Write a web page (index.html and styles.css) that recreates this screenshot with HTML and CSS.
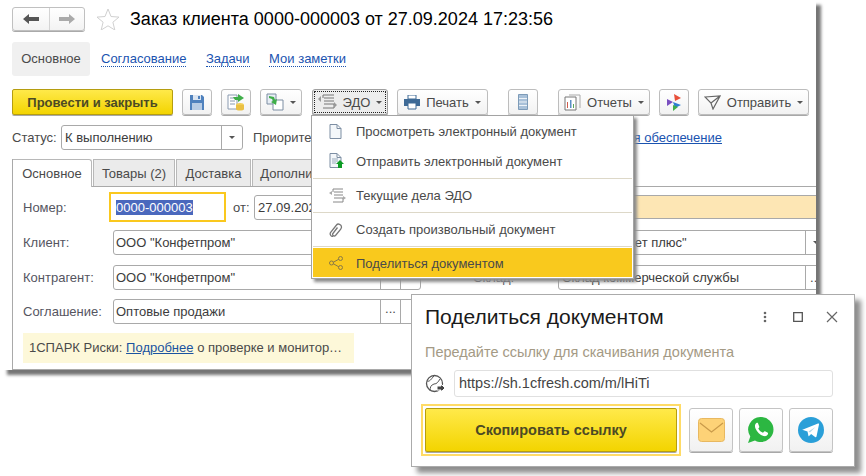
FILE: index.html
```html
<!DOCTYPE html>
<html lang="ru">

<head>
    <meta charset="UTF-8" />
    <title>Заказ клиента</title>
    <link rel="stylesheet" href="styles.css">
</head>

<body>
    <!-- MAIN WINDOW -->
    <div class="window">
        <div class="title-row">
            <div class="history-btns">
                <div class="history-btn">
                    <svg width="16" height="12" viewBox="0 0 16 12"><path d="M0 6 6 1v3h10v4H6v3z" fill="#555"/></svg>
                </div>
                <div class="history-btn">
                    <svg width="16" height="12" viewBox="0 0 16 12"><path d="M16 6 10 1v3H0v4h10v3z" fill="#aaa"/></svg>
                </div>
            </div>
            <svg class="star" width="24" height="22" viewBox="0 0 24 22"><path d="M12 1l3 7.500 8 .6-6.100 5.100 1.900 7.800L12 17.800 5.200 22l1.900-7.800L1 9.100l8-.6z" fill="#fff" stroke="#d0d0d0"/></svg>
            <div class="page-title">Заказ клиента 0000-000003 от 27.09.2024 17:23:56</div>
        </div>

        <div class="section-tabs">
            <div class="section-tab active">Основное</div>
            <a class="section-link">Согласование</a>
            <a class="section-link">Задачи</a>
            <a class="section-link">Мои заметки</a>
        </div>

        <!-- TOOLBAR -->
        <div class="toolbar">
            <div class="btn btn-yellow btn-post">Провести и закрыть</div>
            <div class="btn btn-icon gap-9">
                <svg width="16" height="17" viewBox="0 0 16 17"><path d="M1 1h12l2 2v13H1z" fill="#4f81bd"/><path d="M4 1h8v5H4z" fill="#dbe5f1"/><path d="M3 9h10v7H3z" fill="#b8cce4"/><path d="M9 2h2v3H9z" fill="#4f81bd"/></svg>
            </div>
            <div class="btn btn-icon gap-9">
                <svg width="18" height="18" viewBox="0 0 18 18"><path d="M1 2h9v14H1z" fill="#fff" stroke="#8a9ab0"/><path d="M3 5h5M3 8h5M3 11h5" stroke="#8a9ab0"/><path d="M6 4h5V1l6 4-6 4V7H8z" fill="#3fae49"/><ellipse cx="13" cy="12" rx="4" ry="2" fill="#f3cf55"/><path d="M9 12h8v4c0 2-8 2-8 0z" fill="#eac043"/></svg>
            </div>
            <div class="btn btn-drop gap-9 btn-copy">
                <svg width="18" height="18" viewBox="0 0 18 18"><path d="M1 1h9v10H1z" fill="#e8eef5" stroke="#7d8ea3"/><path d="M7 7h10v10H7z" fill="#fff" stroke="#7d8ea3"/><path d="M3 3l5 1 1 3 2-1-1 6-5-3 2-1-1-2-3-1z" fill="#3fae49"/></svg>
                <span class="caret"></span>
            </div>
            <div class="btn btn-drop btn-focus gap-10 btn-edo">
                <svg width="19" height="16" viewBox="0 0 19 16"><path d="M5 1h11M6 4h10M6 7h10M6 10h10M5 14h11M5 1v3M16 10v4" fill="none" stroke="#777"/><path d="M0 5l3-3v6zM19 11l-3-3v6z" fill="#999"/></svg>
                <span class="btn-text">ЭДО</span>
                <span class="caret"></span>
            </div>
            <div class="btn btn-drop gap-9 btn-print">
                <svg width="16" height="15" viewBox="0 0 16 15"><path d="M4 0h8v4H4z" fill="#fff" stroke="#3e6a96"/><path d="M0 4h16v7H0z" fill="#3e6a96"/><path d="M4 8h8v6H4z" fill="#fff" stroke="#3e6a96"/></svg>
                <span class="btn-text">Печать</span>
                <span class="caret"></span>
            </div>
            <div class="btn btn-icon gap-20">
                <svg width="10" height="16" viewBox="0 0 10 16"><path d="M.5.5h9v15h-9z" fill="#a9c1d9" stroke="#7d9bb8"/><path d="M1 4.500h8M1 8h8M1 11.500h8" stroke="#eef3f8"/></svg>
            </div>
            <div class="btn btn-drop gap-20 btn-reports">
                <svg width="17" height="17" viewBox="0 0 17 17"><path d="M1 3h11v13H1z" fill="#fff" stroke="#777"/><path d="M5 1h11v13" fill="none" stroke="#aaa"/><path d="M3 8h1v6H3z" fill="#d05a4a"/><path d="M6 6h1.500v8H6z" fill="#5a8fc5"/><path d="M9 10h1v4H9z" fill="#5aa85a"/></svg>
                <span class="btn-text">Отчеты</span>
                <span class="caret"></span>
            </div>
            <div class="btn btn-icon gap-9">
                <svg width="14" height="17" viewBox="0 0 14 17"><path d="M7 0l7 4-6 3z" fill="#e8503a"/><path d="M0 5l6 3-6 4z" fill="#7a4fc0"/><path d="M6 8l8 3-6 3z" fill="#2f7fd1"/><path d="M6 11l5 2-5 4z" fill="#3fae49"/></svg>
            </div>
            <div class="btn btn-drop gap-9 btn-send">
                <svg width="17" height="15" viewBox="0 0 17 15"><path d="M1 2l15-1-7 13-2-6zM7 8l9-7" fill="none" stroke="#666" stroke-width="1.200"/></svg>
                <span class="btn-text">Отправить</span>
                <span class="caret"></span>
            </div>
        </div>

        <!-- STATUS -->
        <div class="status-row">
            <span class="label-status">Статус:</span>
            <div class="field field-status">
                <span class="field-text">К выполнению</span>
                <span class="field-btn"><span class="caret"></span></span>
            </div>
            <span class="label-priority">Приоритет</span>
            <a class="status-link">я обеспечение</a>
        </div>

        <!-- TABS WITH FORM -->
        <div class="panel">
            <div class="panel-tabs">
                <div class="panel-tab current">Основное</div>
                <div class="panel-tab tab-goods">Товары (2)</div>
                <div class="panel-tab tab-delivery">Доставка</div>
                <div class="panel-tab tab-more">Дополнительно</div>
            </div>

            <div class="form-row row-number">
                <span class="form-label">Номер:</span>
                <div class="number-box"><span class="number-selected">0000-000003</span></div>
                <span class="label-from">от:</span>
                <div class="field field-date"><span class="field-text">27.09.2024</span></div>
                <div class="warn-band"></div>
            </div>

            <div class="form-row row-client">
                <span class="form-label">Клиент:</span>
                <div class="field field-main">
                    <span class="field-text">ООО "Конфетпром"</span>
                    <span class="field-btn btn-wide"></span>
                    <span class="field-btn btn-wide"></span>
                </div>
                <span class="form-label-right"></span>
                <div class="field field-right">
                    <span class="field-text">ООО "Бюджет плюс"</span>
                    <span class="field-btn btn-end"><span class="caret"></span></span>
                </div>
            </div>

            <div class="form-row row-partner">
                <span class="form-label">Контрагент:</span>
                <div class="field field-main">
                    <span class="field-text">ООО "Конфетпром"</span>
                    <span class="field-btn btn-wide"></span>
                    <span class="field-btn btn-wide"></span>
                </div>
                <span class="form-label-right">Склад:</span>
                <div class="field field-right">
                    <span class="field-text">Склад коммерческой службы</span>
                    <span class="field-btn btn-end">...</span>
                </div>
            </div>

            <div class="form-row row-agreement">
                <span class="form-label">Соглашение:</span>
                <div class="field field-main">
                    <span class="field-text">Оптовые продажи</span>
                    <span class="field-btn btn-wide">...</span>
                    <span class="field-btn btn-wide"></span>
                </div>
            </div>

            <div class="note">1СПАРК Риски: <a class="note-link">Подробнее</a> о проверке и монитор…</div>
        </div>
    </div>

    <!-- EDO POPUP MENU -->
    <div class="menu">
        <div class="menu-item">
            <svg width="13" height="15" viewBox="0 0 13 15"><path d="M1 .5h7l4 4v10H1zM8 .5v4h4" fill="#f4f7fa" stroke="#7d8ea3"/></svg>
            <span>Просмотреть электронный документ</span>
        </div>
        <div class="menu-item">
            <svg width="15" height="16" viewBox="0 0 15 16"><path d="M1 .5h7l4 4v10H1zM8 .5v4h4" fill="#f4f7fa" stroke="#7d8ea3"/><path d="M3 6h6M3 8h6M3 10h4" stroke="#9ab"/><path d="M11 7l4 4h-2v4h-4v-4H7z" fill="#0c9c24"/></svg>
            <span>Отправить электронный документ</span>
        </div>
        <div class="menu-sep"></div>
        <div class="menu-item">
            <svg width="17" height="15" viewBox="0 0 17 15"><path d="M4 1h10M5 4h9M5 7h9M5 10h9M4 14h10M4 1v3M14 10v4" fill="none" stroke="#888"/><path d="M0 5l3-2v4zM17 10l-3-2v4z" fill="#aaa"/></svg>
            <span>Текущие дела ЭДО</span>
        </div>
        <div class="menu-sep"></div>
        <div class="menu-item">
            <svg width="15" height="15" viewBox="0 0 15 15"><path d="M4 14.500c-2 0-3.500-2-2.500-4l6-7.500c1.500-2 5-.5 5 2 0 1-.5 1.500-1 2.500l-5 6c-1 1-3 .5-3-1.500l5-6.500" fill="none" stroke="#777" stroke-width="1.300"/></svg>
            <span>Создать произвольный документ</span>
        </div>
        <div class="menu-sep"></div>
        <div class="menu-item selected">
            <svg width="14" height="14" viewBox="0 0 14 14"><path d="M3 7l8-4.500M3 7l8 4.500" stroke="#8a7a45"/><circle cx="2.500" cy="7" r="2" fill="#f9c91d" stroke="#8a7a45"/><circle cx="11.500" cy="2.500" r="2" fill="#f9c91d" stroke="#8a7a45"/><circle cx="11.500" cy="11.500" r="2" fill="#f9c91d" stroke="#8a7a45"/></svg>
            <span>Поделиться документом</span>
        </div>
    </div>

    <!-- SHARE DIALOG -->
    <div class="dialog">
        <div class="dialog-head">
            <div class="dialog-title">Поделиться документом</div>
            <svg class="dialog-dots" width="4" height="12" viewBox="0 0 4 12"><circle cx="2" cy="2" r="1.300" fill="#666"/><circle cx="2" cy="6" r="1.300" fill="#666"/><circle cx="2" cy="10" r="1.300" fill="#666"/></svg>
            <svg class="dialog-max" width="10" height="10" viewBox="0 0 10 10"><path d="M.7.7h8.600v8.600H.7z" fill="none" stroke="#555" stroke-width="1.300"/></svg>
            <svg class="dialog-close" width="12" height="12" viewBox="0 0 12 12"><path d="M1 1l10 10M11 1L1 11" stroke="#666" stroke-width="1.200"/></svg>
        </div>
        <div class="dialog-hint">Передайте ссылку для скачивания документа</div>
        <div class="link-row">
            <svg width="20" height="20" viewBox="0 0 20 20"><circle cx="9.500" cy="9.500" r="8" fill="none" stroke="#555" stroke-width="1.300"/><path d="M2 7c3 1 4-2 7-5M5 17c0-4 1-6 4-7 3 0 4-2 6-5" fill="none" stroke="#555"/><path d="M12 12h4v-2l4 4-4 4v-2h-4z" fill="#444" stroke="#fff"/></svg>
            <div class="link-input">https://sh.1cfresh.com/m/lHiTi</div>
        </div>
        <div class="dialog-actions">
            <div class="copy-wrap"><div class="btn-yellow copy-btn">Скопировать ссылку</div></div>
            <div class="share-btn">
                <svg width="27" height="24" viewBox="0 0 27 24"><rect x=".5" y=".5" width="26" height="23" rx="3" fill="#fdd277" stroke="#e8b860"/><path d="M2 5l11.500 9L25 5" fill="none" stroke="#c99a4a" stroke-width="1.200"/></svg>
            </div>
            <div class="share-btn">
                <svg width="26" height="26" viewBox="0 0 26 26"><path d="M13 0a12.500 12.500 0 0 1 0 25c-2.200 0-4.300-.6-6-1.600L0 26l2.300-6.600A12.500 12.500 0 0 1 13 0z" fill="#2cb742"/><path d="M8.500 6c-1.500 1-2 3-1 5.500 1.500 3.500 4.500 6.500 8 7.500 2.500.5 4-.5 4.500-2 .2-.8 0-1.200-.5-1.500l-2.500-1.200c-.5-.2-.8 0-1.100.4l-.9 1.100c-2-.7-3.700-2.300-4.700-4.300l.8-1c.3-.4.3-.7.100-1.100L10 6.300C9.700 5.800 9 5.700 8.500 6z" fill="#fff"/></svg>
            </div>
            <div class="share-btn">
                <svg width="26" height="26" viewBox="0 0 26 26"><circle cx="13" cy="13" r="13" fill="#2a9fd8"/><path d="M5 12.500l15-6c.7-.2 1.200.2 1 1l-2.500 12c-.2.800-.8 1-1.400.6l-4-3-2 1.900c-.3.300-.6.300-.7-.2l-.9-4.300-4.500-1.400c-.8-.3-.8-.4 0-.6z" fill="#fff"/><path d="M10.500 14.500l7-4.500-5.500 5.500z" fill="#b5d9ea"/></svg>
            </div>
        </div>
    </div>
</body>

</html>
```

FILE: styles.css
```css
* {
box-sizing: border-box;
}

body {
margin: 0;
padding: 0;
background-color: #fff;
font-family: "Liberation Sans", Arial, sans-serif;
font-size: 13px;
color: #4a4a4a;
width: 866px;
height: 476px;
position: relative;
overflow: hidden;
}

a {
color: #1a53b0;
text-decoration: underline;
}

svg {
flex: none;
display: block;
}

/* main window */
.window {
position: absolute;
left: 2px;
top: 0;
width: 814px;
height: 370px;
background-color: #fff;
box-shadow: 5px 5px 3px #757575;
padding: 7px 0 0 10px;
display: flex;
flex-direction: column;
}

.title-row {
height: 24px;
display: flex;
align-items: center;
}

.history-btns {
width: 73px;
height: 24px;
display: flex;
border: 1px solid #c0c0c0;
border-radius: 3px;
background: linear-gradient(#fff, #f3f3f3);
box-shadow: 0 1px 0 #aaa;
}

.history-btn {
width: 50%;
display: flex;
align-items: center;
justify-content: center;
}

.history-btn+.history-btn {
border-left: 1px solid #d4d4d4;
}

.star {
margin-left: 11px;
}

.page-title {
margin-left: 10px;
font-size: 18px;
color: #000;
white-space: nowrap;
}

.section-tabs {
height: 34px;
margin-top: 11px;
display: flex;
align-items: center;
}

.section-tab {
width: 78px;
height: 34px;
line-height: 34px;
text-align: center;
background-color: #f0f0f0;
border-radius: 3px;
}

.section-link {
text-decoration: none;
border-bottom: 1px dotted #1a53b0;
line-height: 14px;
margin-left: 19.5px;
}

.section-tabs .active+.section-link {
margin-left: 11px;
}

/* toolbar */
.toolbar {
height: 26px;
margin-top: 13px;
display: flex;
}

.btn {
height: 26px;
display: flex;
align-items: center;
justify-content: center;
border: 1px solid #bdbdbd;
border-radius: 3px;
background: linear-gradient(#fff, #f2f2f2);
box-shadow: 0 1px 0 #a8a8a8;
white-space: nowrap;
}

.btn-yellow {
background: linear-gradient(#ffe94a, #f3d400);
border: 1px solid #b59d10;
border-radius: 2px;
color: #4c4a24;
font-weight: bold;
}

.btn-post {
width: 161px;
}

.btn-icon {
width: 30px;
}

.gap-9 {
margin-left: 9px;
}

.gap-10 {
margin-left: 10px;
}

.gap-20 {
margin-left: 20px;
}

.btn-copy {
width: 42px;
}

.btn-edo {
width: 76px;
}

.btn-print {
width: 91px;
}

.btn-reports {
width: 92px;
}

.btn-send {
width: 111px;
}

.btn-focus {
background: #ededed;
border-color: #a0a0a0;
outline: 1px dotted #222;
outline-offset: -3px;
}

.btn-text {
margin-left: 6px;
}

.caret {
display: inline-block;
width: 0;
height: 0;
margin-left: 6px;
border-left: 3px solid transparent;
border-right: 3px solid transparent;
border-top: 3px solid #555;
}

.field-btn .caret {
margin-left: 0;
}

/* status row */
.status-row {
height: 25px;
margin-top: 10px;
display: flex;
align-items: center;
}

.label-status {
width: 49px;
}

.field {
height: 25px;
display: flex;
align-items: center;
background-color: #fff;
border: 1px solid #a9a9a9;
border-radius: 3px;
white-space: nowrap;
}

.field-text {
flex: 1;
padding-left: 3px;
color: #3c3c3c;
overflow: hidden;
}

.field-btn {
width: 21px;
height: 100%;
display: flex;
align-items: center;
justify-content: center;
border-left: 1px solid #a9a9a9;
flex: none;
}

.field-status {
width: 182px;
}

.label-priority {
margin-left: 10px;
}

.status-link {
margin-left: auto;
margin-right: 94px;
}

/* panel with tabs */
.panel {
flex: 1;
margin-top: 9px;
border-left: 1px solid #a9a9a9;
border-bottom: 1px solid #a9a9a9;
overflow: hidden;
}

.panel-tabs {
height: 28px;
display: flex;
border-bottom: 1px solid #a9a9a9;
}

.panel-tab {
width: 75px;
height: 27px;
line-height: 27px;
text-align: center;
background-color: #ebebeb;
border: 1px solid #b8b8b8;
border-bottom: none;
margin-left: 1px;
white-space: nowrap;
}

.panel-tab.current {
width: 79px;
height: 28px;
margin-left: 0;
background-color: #fff;
border-left: none;
border-radius: 0 3px 0 0;
}

.tab-goods {
width: 82px;
}

.tab-more {
width: 110px;
}

.form-row {
display: flex;
align-items: center;
padding-left: 10px;
}

.row-number {
height: 30px;
margin-top: 5px;
}

.row-client {
height: 25px;
margin-top: 8px;
}

.row-partner {
height: 25px;
margin-top: 10px;
}

.row-agreement {
height: 25px;
margin-top: 9px;
}

.form-label {
width: 90px;
flex: none;
color: #55555f;
}

.number-box {
width: 117px;
height: 30px;
flex: none;
margin-left: -4px;
border: 2px solid #fac81e;
display: flex;
align-items: center;
padding-left: 5px;
}

.number-selected {
background-color: #4a68bd;
color: #fff;
line-height: 15px;
}

.label-from {
margin-left: 7px;
width: 21px;
flex: none;
}

.field-date {
width: 78px;
flex: none;
height: 25px;
}

.warn-band {
width: 480px;
height: 24px;
margin-left: 8px;
flex: none;
background-color: #fde6b4;
border-top: 1px solid #a9a9a9;
border-bottom: 1px solid #a9a9a9;
}

.field-main {
width: 308px;
flex: none;
}

.field-main .field-text {
padding-left: 2px;
}

.btn-wide {
width: 20px;
padding-bottom: 6px;
}

.form-label-right {
width: 85px;
margin-left: 52px;
flex: none;
color: #55555f;
}

.field-right {
width: 268px;
flex: none;
}

.btn-end {
width: 20px;
padding-bottom: 0;
}

.note {
width: 331px;
height: 30px;
line-height: 30px;
margin: 9px 0 0 10px;
padding-left: 6px;
background-color: #fdf8d9;
white-space: nowrap;
}

.note-link {
color: #1a53a0;
}

/* EDO menu */
.menu {
position: absolute;
left: 311px;
top: 115px;
width: 323px;
height: 164px;
background-color: #fff;
border: 1px solid #a3a3a3;
box-shadow: 3px 3px 3px #8a8a8a;
padding: 0 1px 1px;
}

.menu-item {
height: 30px;
display: flex;
align-items: center;
padding-left: 16px;
position: relative;
}

.menu-item span {
position: absolute;
left: 43px;
}

.menu-sep {
height: 1px;
margin: 2px 0 1px;
background-color: #ddd8c8;
}

.selected {
height: 29px;
margin-top: 1px;
padding-top: 1px;
background-color: #f9c91d;
}

/* share dialog */
.dialog {
position: absolute;
left: 411px;
top: 294px;
width: 444px;
height: 173px;
background-color: #fff;
border: 1px solid #ababab;
box-shadow: 6px 6px 5px #8f8f8f;
padding: 0 21px 0 13px;
}

.dialog-head {
height: 44px;
display: flex;
align-items: center;
}

.dialog-title {
font-size: 21px;
color: #1a1a1a;
flex: 1;
}

.dialog-dots {
margin-right: 26px;
}

.dialog-max {
margin-right: 23px;
}

.dialog-close {
margin-right: -5px;
}

.dialog-hint {
margin-top: 5px;
font-size: 14.5px;
color: #a49a85;
height: 16px;
line-height: 16px;
white-space: nowrap;
}

.link-row {
margin-top: 10px;
display: flex;
align-items: center;
}

.link-input {
width: 380px;
height: 27px;
line-height: 25px;
margin-left: 9px;
padding-left: 4px;
border: 1px solid #e0e0e0;
border-radius: 3px;
font-size: 14.5px;
color: #444;
}

.dialog-actions {
margin-top: 7px;
display: flex;
align-items: center;
}

.copy-wrap {
width: 260px;
height: 52px;
margin: 0 8px 0 -4px;
border: 2px solid #ffdb66;
padding: 2px;
}

.copy-btn {
height: 44px;
line-height: 42px;
text-align: center;
font-size: 14.5px;
box-shadow: 0 1px 0 #a8a8a8;
}

.share-btn {
width: 44px;
height: 44px;
margin-right: 6px;
display: flex;
align-items: center;
justify-content: center;
border: 1px solid #c4c4c4;
border-radius: 3px;
background: linear-gradient(#fff, #f1f1f1);
box-shadow: 0 1px 0 #a8a8a8;
}

.share-btn:last-child {
margin-right: 0;
}
```
